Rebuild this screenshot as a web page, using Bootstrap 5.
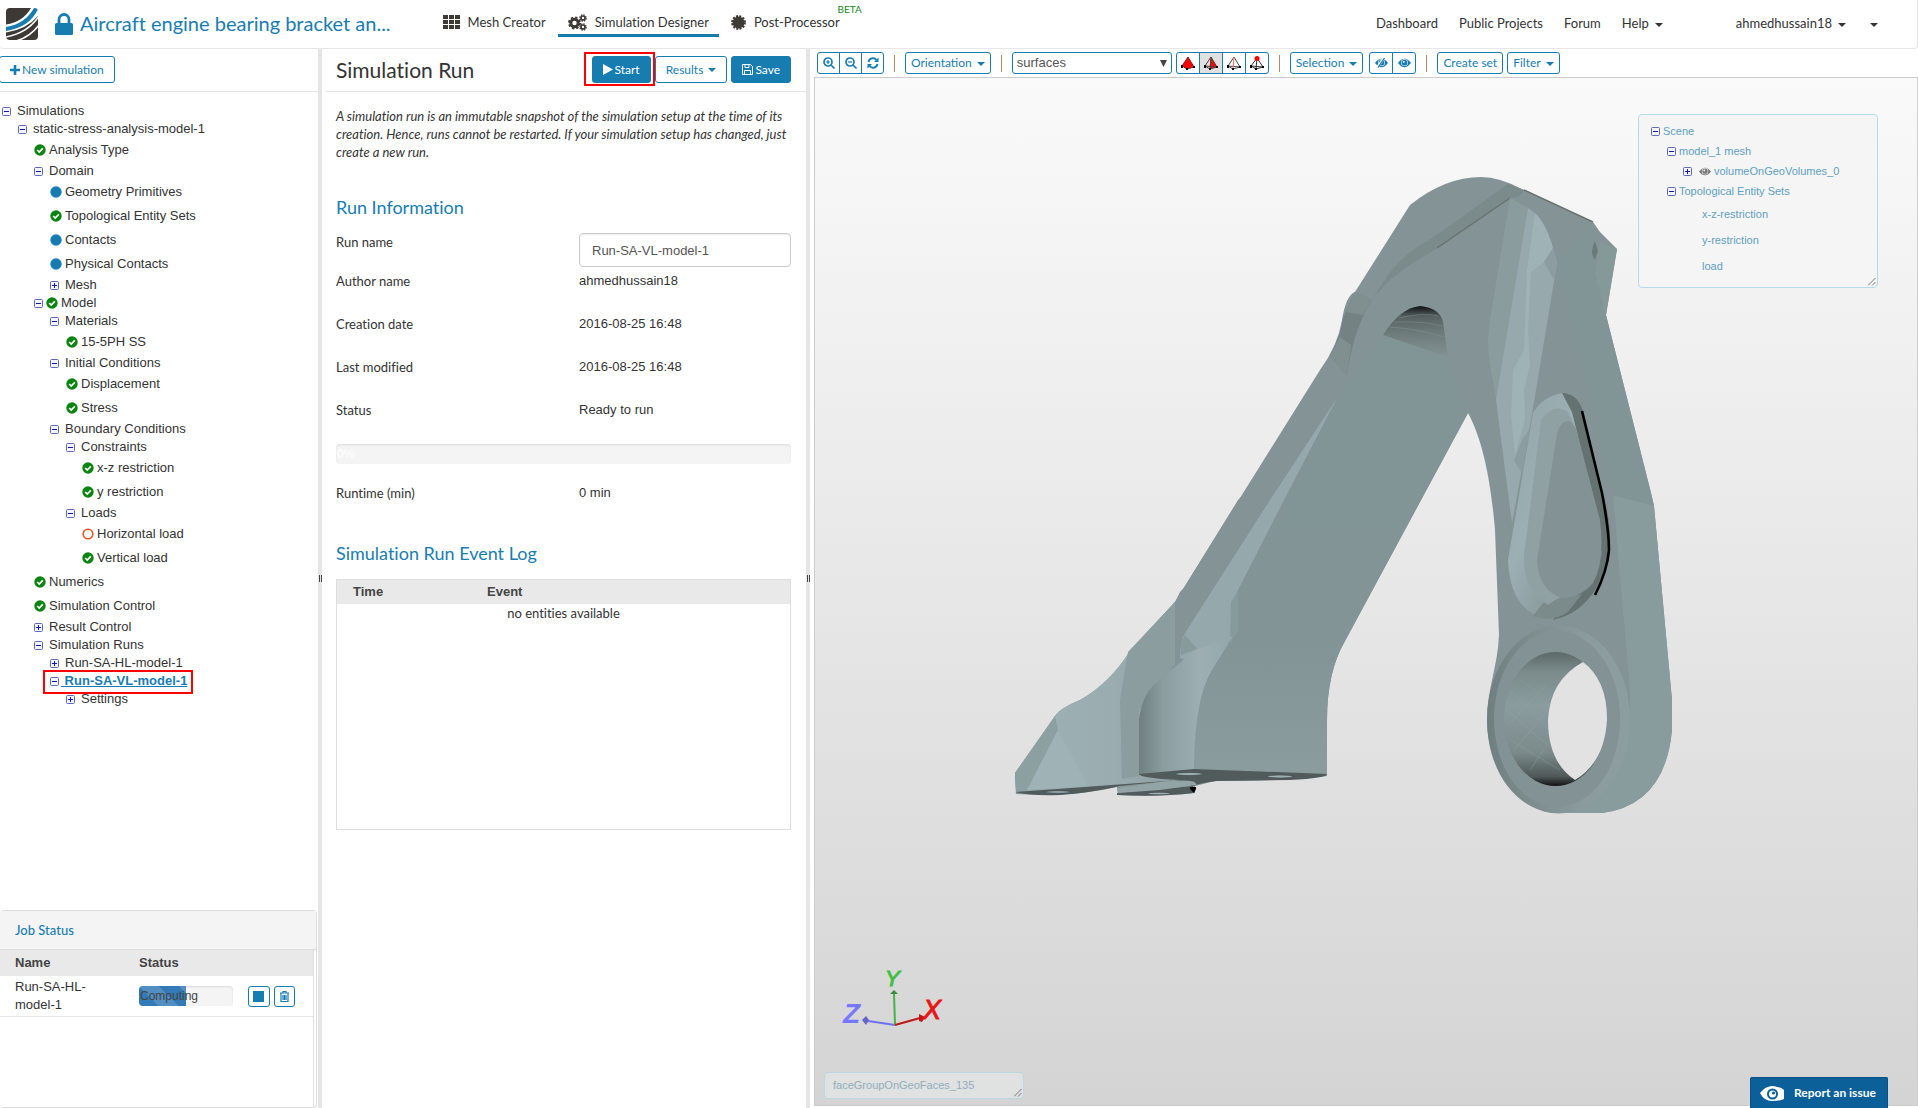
<!DOCTYPE html>
<html lang="en">
<head>
<meta charset="utf-8">
<meta name="viewport" content="width=device-width, initial-scale=1">
<title>Simulation Designer</title>
<link href="https://cdn.jsdelivr.net/npm/bootstrap@5.3.0/dist/css/bootstrap.min.css" rel="stylesheet">
<style>
:root{--brand:#177db0;--ink:#333;--bar:#e5e5e5}
body{font-family:Lato,"Liberation Sans",sans-serif;font-size:13px;line-height:18px;color:var(--ink);height:100vh;overflow:hidden;background:#fff;font-variant-ligatures:none}
a{color:inherit;text-decoration:none}
svg{display:block;flex:none}
.topbar{height:49px;border-bottom:1px solid #e7e7e7;border-right:1px solid #e7e7e7;border-radius:0 0 4px 4px;padding-left:6px}
.proj-title{font-size:20px;line-height:26px;color:var(--brand);margin:-2px 0 0 6px}
.tabs-main{margin-left:42px;gap:2px}
.tab-item{height:37px;padding:10px 10px 0;border-bottom:3px solid transparent;position:relative}
.tab-item.current{border-color:var(--brand)}
.beta{position:absolute;right:-12px;top:3px;font-size:10px;line-height:12px;color:#128a1a}
.caret:after{content:"";display:inline-block;border:4px solid transparent;border-top-color:currentColor;border-bottom:0;vertical-align:middle;margin-left:6px}
.tbtn .caret:after{margin-left:5px}
.top-links{gap:21px;padding-right:39px;margin-top:-2px}
.user-link{margin-left:52px}
.more-link{margin-left:-3px}
.arial{font-family:"Liberation Sans",Arial,sans-serif;font-size:13px}
.side{width:318px}
.mid{width:484px}
.splitter{width:4px;background:var(--bar)}
.grip{width:3px;height:7px;border:solid #444;border-width:0 1px}
.tbtn{font-family:inherit;font-size:12px;border:1px solid var(--brand);border-radius:3px;color:var(--brand);background:#fff;display:inline-flex;align-items:center;justify-content:center;white-space:nowrap}
.tbtn.md{height:27px;padding:0 10px;gap:2px}
.tbtn.sm{height:22px;padding:0 5px}
.tbtn.fillb{background:var(--brand);color:#fff}
.tbtn.new-sim{margin:7px 0 8px -1px}
.strip{height:43px;border-bottom:1px solid #e5e5e5}
.mid .strip{padding:0 15px 1px 10px}
.tree,.tree ul{list-style:none;margin:0;padding:0}
.tree ul{padding-left:16px}
.tree{padding:10px 0 0 2px}
.node{display:flex;align-items:center;height:18px;position:relative}
.node.leaf{height:24px}
.tog{border:0;background:none;padding:0;width:11px;margin-right:4px;flex:none}
.tog.tight{width:9px;margin-right:3px}
.st{margin-right:3px}
.picked{color:var(--brand);font-weight:700;text-decoration:underline;white-space:pre;margin-left:-4px}
.mark-red{position:absolute;border:2px solid #f00;pointer-events:none}
.jobs{border:1px solid #ddd;border-left:0;border-radius:4px;margin-right:1px;height:198px}
.jobs h2{font-size:13px;line-height:38px;color:var(--brand);background:#f4f4f4;margin:0;padding-left:15px;border-bottom:1px solid #ddd}
.jobs-body{border-right:1px solid #ddd;margin-right:2px}
.grid-t{width:100%;border-collapse:collapse}
.grid-t th{background:#e9e9e9;color:#444}
.jobs .grid-t th{height:26px;padding:0 0 0 15px}
.jobs .grid-t td{padding:2px 0 2px 15px;border-bottom:1px solid #e5e5e5}
.jobs .grid-t th+th,.jobs .grid-t td+td{padding-left:0}
.meter{background:#f4f4f4;border-radius:4px;height:20px;box-shadow:inset 0 1px 2px rgba(0,0,0,.1);overflow:hidden;display:flex;align-items:center;position:relative}
.meter-fill{height:20px;background-color:#337ab7;background-image:linear-gradient(45deg,rgba(255,255,255,.15) 25%,transparent 25%,transparent 50%,rgba(255,255,255,.15) 50%,rgba(255,255,255,.15) 75%,transparent 75%);background-size:40px 40px}
.meter-label{position:absolute;left:1px;font-size:12px;color:#444}
.mid h1{font-size:21px;line-height:26px;margin:0;font-weight:400}
.mid h2{font-size:18px;line-height:24px;margin:0;font-weight:400;color:var(--brand)}
.mid-body{padding:15px 15px 0 14px}
.mid .info-head{margin-top:34px}
.name-row{margin-top:14px;margin-bottom:5px}
.pairs{display:grid;grid-template-columns:243px 1fr;margin:0}
.pairs dt{font-weight:400}
.pairs dt,.pairs dd{margin:0;height:43px}
.name-row label{width:243px}
.name-in{height:34px;border:1px solid #ccc;border-radius:4px;padding:0 12px;color:#555;box-shadow:inset 0 1px 1px rgba(0,0,0,.075);min-width:0}
.runtime{padding-top:20px}
.mid .log-head{margin-top:14px}
.log-box{border:1px solid #ddd;height:251px;margin-top:14px}
.log-box th{height:24px}
.log-box td{font-family:Lato,sans-serif;font-size:13px;padding:0;text-align:center}
.tools{height:28px;padding:3px 0 0 7px}
.tools .sep{width:1px;height:17px;background:#b08a60;margin:3px 10px 0}
.surf{width:160px;height:22px;border:1px solid var(--brand);border-radius:3px;padding:0 4px;color:#555;background:#fff;appearance:none;font-size:13px}
.surf-wrap{position:relative}
.surf-wrap svg{position:absolute;right:5px;top:8px}
.joined .tbtn{border-radius:0;margin-left:-1px;width:24px;padding:0}
.joined.slim .tbtn{width:23px}
.joined .tbtn:first-child{border-radius:3px 0 0 3px;margin-left:0}
.joined .tbtn:last-child{border-radius:0 3px 3px 0}
.joined .on{background:#e0e0e0}
.eyes{margin-left:6px}
.view{position:relative;border:1px solid #ccc;margin:0 0 2px 4px;background:linear-gradient(#fafafa,#d4d4d4);overflow:hidden}
.view>.model{position:absolute;inset:0;width:100%;height:100%}
.scene{position:absolute;right:39px;top:36px;width:240px;height:174px;border:1px solid #b5dbe8;border-radius:4px;background:#f5f5f5;color:#5fa0c0;font-size:11px;padding:6px 0 0 12px}
.scene .node{height:20px}
.scene .node.leaf{height:26px;padding-left:51px}
.scene .tog{width:9px;margin-right:3px}
.corner{position:absolute;right:1px;bottom:1px}
.facebox{position:absolute;left:9px;bottom:6px;width:200px;height:27px;border:1px solid #bcd7e0;border-radius:4px;background:#e0e1e1;color:#92adbb;font-size:11px;line-height:25px;padding-left:8px}
.report{position:absolute;right:30px;bottom:0;height:31px;width:138px;border:1px solid #0a4f86;border-bottom:0;border-radius:2px 2px 0 0;background:#0b6099;color:#fff;font-size:12px;font-weight:700;padding:0 9px;display:flex;align-items:center;gap:9px;font-family:inherit;white-space:nowrap}
</style>
<script src="https://cdn.jsdelivr.net/npm/bootstrap@5.3.0/dist/js/bootstrap.bundle.min.js"></script>
</head>
<body class="d-flex flex-column">
<svg width="0" height="0" class="position-absolute">
<defs>
<symbol id="minus" viewBox="0 0 9 9"><rect x=".5" y=".5" width="8" height="8" rx="1" fill="#f3f3f8" stroke="#5b6cb4"/><path d="M2 4.500h5" stroke="#1414b8"/></symbol>
<symbol id="plus" viewBox="0 0 9 9"><rect x=".5" y=".5" width="8" height="8" rx="1" fill="#f3f3f8" stroke="#5b6cb4"/><path d="M2 4.500h5M4.500 2v5" stroke="#1414b8"/></symbol>
<symbol id="ok" viewBox="0 0 12 12"><circle cx="6" cy="6" r="5.700" fill="#0a8410"/><path d="M3.200 6l2 2 3.600-3.700" fill="none" stroke="#fff" stroke-width="1.700"/></symbol>
<symbol id="dot" viewBox="0 0 12 12"><circle cx="6" cy="6" r="5.700" fill="#177db0"/></symbol>
<symbol id="ring" viewBox="0 0 12 12"><circle cx="6" cy="6" r="4.800" fill="none" stroke="#e8502a" stroke-width="1.600"/></symbol>
<symbol id="eye" viewBox="0 0 14 10"><path d="M0 5Q7-4 14 5Q7 14 0 5z" fill="currentColor"/><circle cx="7" cy="4.600" r="3.700" fill="#fff"/><circle cx="7" cy="4.600" r="3.100" fill="currentColor"/><circle cx="6.200" cy="3.700" r="1" fill="#fff"/></symbol>
<symbol id="corner" viewBox="0 0 8 8"><path d="M0 7.500L7.500 0M4 7.500L7.500 4" stroke="#777" stroke-width="1"/></symbol>
</defs>
</svg>

<header class="topbar d-flex align-items-center flex-shrink-0">
  <a href="#" aria-label="Home"><svg width="32" height="32" viewBox="0 0 32 32"><defs><clipPath id="lg"><rect width="32" height="32" rx="4"/></clipPath></defs><g clip-path="url(#lg)"><rect width="32" height="32" fill="#3d3935"/><path d="M0 16.500Q17 14 25 0H36V2Q25 21 0 24.500z" fill="#fff"/><path d="M0 19Q19 16 28 0H32V1Q24 19 0 23z" fill="#177db0"/><path d="M0 29Q22 25 33 8M10 33Q24 29 33 17" fill="none" stroke="#fff" stroke-width="1.600"/></g></svg></a>
  <svg class="ms-3" width="20" height="22" viewBox="0 0 20 22"><path d="M5 11V6.500a5 5 0 0 1 10 0V11" fill="none" stroke="#177db0" stroke-width="2.800"/><rect x="1" y="10" width="18" height="12" rx="1.500" fill="#177db0"/></svg>
  <a href="#" class="proj-title">Aircraft engine bearing bracket an...</a>
  <nav class="tabs-main d-flex align-self-start">
    <a href="#" class="tab-item d-flex align-items-center gap-2"><svg width="17" height="14" viewBox="0 0 17 14" fill="#3d3935"><path d="M0 0h5v4H0zM6 0h5v4H6zM12 0h5v4h-5zM0 5h5v4H0zM6 5h5v4H6zM12 5h5v4h-5zM0 10h5v4H0zM6 10h5v4H6zM12 10h5v4h-5z"/></svg>Mesh Creator</a>
    <a href="#" class="tab-item current d-flex align-items-center gap-2"><svg width="19" height="17" viewBox="0 0 19 17" fill="none" stroke="#3d3935"><circle cx="6.500" cy="9" r="3.700" stroke-width="3"/><circle cx="6.500" cy="9" r="5.600" stroke-width="1.800" stroke-dasharray="2.400 2"/><circle cx="15" cy="4" r="2" stroke-width="1.700"/><circle cx="15" cy="4" r="3.200" stroke-width="1.200" stroke-dasharray="1.500 1"/><circle cx="15" cy="13" r="2" stroke-width="1.700"/><circle cx="15" cy="13" r="3.200" stroke-width="1.200" stroke-dasharray="1.500 1"/></svg>Simulation Designer</a>
    <a href="#" class="tab-item d-flex align-items-center gap-2"><svg width="15" height="15" viewBox="0 0 15 15"><circle cx="7.500" cy="7.500" r="5.900" fill="#3d3935"/><circle cx="7.500" cy="7.500" r="6.300" fill="none" stroke="#3d3935" stroke-width="2.200" stroke-dasharray="2 1.300"/></svg>Post-Processor<span class="beta">BETA</span></a>
  </nav>
  <nav class="top-links d-flex ms-auto">
    <a href="#">Dashboard</a><a href="#">Public Projects</a><a href="#">Forum</a><a href="#" class="caret">Help</a>
    <a href="#" class="caret user-link">ahmedhussain18</a><a href="#" class="caret more-link" aria-label="More"></a>
  </nav>
</header>

<main class="d-flex flex-grow-1 overflow-hidden">
  <aside class="side d-flex flex-column flex-shrink-0">
    <div class="strip"><button class="tbtn md new-sim"><svg width="10" height="10" viewBox="0 0 10 10"><path d="M5 0v10M0 5h10" stroke="#177db0" stroke-width="2.600"/></svg>New simulation</button></div>
    <ul class="tree arial flex-grow-1">
      <li><div class="node"><button class="tog" aria-label="Collapse"><svg width="9" height="9"><use href="#minus"/></svg></button><a href="#">Simulations</a></div>
      <ul><li><div class="node"><button class="tog" aria-label="Collapse"><svg width="9" height="9"><use href="#minus"/></svg></button><a href="#">static-stress-analysis-model-1</a></div>
        <ul>
        <li class="node leaf"><svg class="st" width="12" height="12"><use href="#ok"/></svg><a href="#">Analysis Type</a></li>
        <li><div class="node"><button class="tog" aria-label="Collapse"><svg width="9" height="9"><use href="#minus"/></svg></button><a href="#">Domain</a></div>
          <ul>
          <li class="node leaf"><svg class="st" width="12" height="12"><use href="#dot"/></svg><a href="#">Geometry Primitives</a></li>
          <li class="node leaf"><svg class="st" width="12" height="12"><use href="#ok"/></svg><a href="#">Topological Entity Sets</a></li>
          <li class="node leaf"><svg class="st" width="12" height="12"><use href="#dot"/></svg><a href="#">Contacts</a></li>
          <li class="node leaf"><svg class="st" width="12" height="12"><use href="#dot"/></svg><a href="#">Physical Contacts</a></li>
          <li class="node"><button class="tog" aria-label="Expand"><svg width="9" height="9"><use href="#plus"/></svg></button><a href="#">Mesh</a></li>
          </ul></li>
        <li><div class="node"><button class="tog tight" aria-label="Collapse"><svg width="9" height="9"><use href="#minus"/></svg></button><svg class="st" width="12" height="12"><use href="#ok"/></svg><a href="#">Model</a></div>
          <ul>
          <li><div class="node"><button class="tog" aria-label="Collapse"><svg width="9" height="9"><use href="#minus"/></svg></button><a href="#">Materials</a></div>
            <ul><li class="node leaf"><svg class="st" width="12" height="12"><use href="#ok"/></svg><a href="#">15-5PH SS</a></li></ul></li>
          <li><div class="node"><button class="tog" aria-label="Collapse"><svg width="9" height="9"><use href="#minus"/></svg></button><a href="#">Initial Conditions</a></div>
            <ul><li class="node leaf"><svg class="st" width="12" height="12"><use href="#ok"/></svg><a href="#">Displacement</a></li>
            <li class="node leaf"><svg class="st" width="12" height="12"><use href="#ok"/></svg><a href="#">Stress</a></li></ul></li>
          <li><div class="node"><button class="tog" aria-label="Collapse"><svg width="9" height="9"><use href="#minus"/></svg></button><a href="#">Boundary Conditions</a></div>
            <ul>
            <li><div class="node"><button class="tog" aria-label="Collapse"><svg width="9" height="9"><use href="#minus"/></svg></button><a href="#">Constraints</a></div>
              <ul><li class="node leaf"><svg class="st" width="12" height="12"><use href="#ok"/></svg><a href="#">x-z restriction</a></li>
              <li class="node leaf"><svg class="st" width="12" height="12"><use href="#ok"/></svg><a href="#">y restriction</a></li></ul></li>
            <li><div class="node"><button class="tog" aria-label="Collapse"><svg width="9" height="9"><use href="#minus"/></svg></button><a href="#">Loads</a></div>
              <ul><li class="node leaf"><svg class="st" width="12" height="12"><use href="#ring"/></svg><a href="#">Horizontal load</a></li>
              <li class="node leaf"><svg class="st" width="12" height="12"><use href="#ok"/></svg><a href="#">Vertical load</a></li></ul></li>
            </ul></li>
          </ul></li>
        <li class="node leaf"><svg class="st" width="12" height="12"><use href="#ok"/></svg><a href="#">Numerics</a></li>
        <li class="node leaf"><svg class="st" width="12" height="12"><use href="#ok"/></svg><a href="#">Simulation Control</a></li>
        <li class="node"><button class="tog" aria-label="Expand"><svg width="9" height="9"><use href="#plus"/></svg></button><a href="#">Result Control</a></li>
        <li><div class="node"><button class="tog" aria-label="Collapse"><svg width="9" height="9"><use href="#minus"/></svg></button><a href="#">Simulation Runs</a></div>
          <ul>
          <li class="node"><button class="tog" aria-label="Expand"><svg width="9" height="9"><use href="#plus"/></svg></button><a href="#">Run-SA-HL-model-1</a></li>
          <li><div class="node"><button class="tog" aria-label="Collapse"><svg width="9" height="9"><use href="#minus"/></svg></button><a href="#" class="picked"> Run-SA-VL-model-1</a><span class="mark-red" style="left:-7px;top:-2px;width:150px;height:24px"></span></div>
            <ul><li class="node"><button class="tog" aria-label="Expand"><svg width="9" height="9"><use href="#plus"/></svg></button><a href="#">Settings</a></li></ul></li>
          </ul></li>
        </ul></li></ul></li>
    </ul>
    <section class="jobs flex-shrink-0">
      <h2>Job Status</h2>
      <div class="jobs-body h-100">
        <table class="grid-t arial">
          <colgroup><col style="width:139px"><col style="width:109px"><col></colgroup>
          <thead><tr><th>Name</th><th colspan="2">Status</th></tr></thead>
          <tbody><tr><td>Run-SA-HL-<br>model-1</td>
          <td><div class="meter" style="width:94px"><div class="meter-fill" style="width:50%"></div><span class="meter-label">Computing</span></div></td>
          <td><div class="d-flex gap-1"><button class="tbtn px-1" aria-label="Stop"><svg width="12" height="17" viewBox="0 0 12 17"><path d="M0 3h11v11H0z" fill="#177db0"/></svg></button><button class="tbtn px-1" aria-label="Delete"><svg width="11" height="17" viewBox="0 0 11 17"><path d="M1 5h9M4 5V3.500h3V5M2 5v8.500h7V5M4 7v5M5.500 7v5M7 7v5" fill="none" stroke="#177db0" stroke-width="1.200"/></svg></button></div></td></tr></tbody>
        </table>
      </div>
    </section>
  </aside>
  <div class="splitter d-flex align-items-center justify-content-center flex-shrink-0"><span class="grip"></span></div>

  <section class="mid flex-shrink-0">
    <div class="strip ms-1 d-flex align-items-center">
      <h1 class="me-auto">Simulation Run</h1>
      <div class="d-flex gap-1 position-relative">
        <button class="tbtn md fillb"><svg width="10" height="11" viewBox="0 0 10 11"><path d="M0 0l10 5.500L0 11z" fill="#fff"/></svg>Start</button>
        <button class="tbtn md"><span class="caret">Results</span></button>
        <button class="tbtn md fillb"><svg width="11" height="11" viewBox="0 0 11 11" fill="none" stroke="#fff"><path d="M.5.500h8l2 2v8H.500zM3 .500v3h4v-3M2.500 10.500v-4h6v4"/></svg>Save</button>
        <span class="mark-red" style="left:-8px;top:-4px;width:71px;height:34px"></span>
      </div>
    </div>
    <div class="mid-body">
      <p class="fst-italic m-0">A simulation run is an immutable snapshot of the simulation setup at the time of its creation. Hence, runs cannot be restarted. If your simulation setup has changed, just create a new run.</p>
      <h2 class="info-head">Run Information</h2>
      <div class="name-row d-flex"><label for="rn">Run name</label><input id="rn" class="name-in arial flex-grow-1" value="Run-SA-VL-model-1"></div>
      <dl class="pairs">
        <dt>Author name</dt><dd class="arial">ahmedhussain18</dd>
        <dt>Creation date</dt><dd class="arial">2016-08-25 16:48</dd>
        <dt>Last modified</dt><dd class="arial">2016-08-25 16:48</dd>
        <dt>Status</dt><dd class="arial">Ready to run</dd>
      </dl>
      <div class="meter arial"><span class="meter-label text-white">0%</span></div>
      <dl class="pairs runtime"><dt>Runtime (min)</dt><dd class="arial">0 min</dd></dl>
      <h2 class="log-head">Simulation Run Event Log</h2>
      <div class="log-box">
        <table class="grid-t arial"><colgroup><col style="width:134px"><col></colgroup>
        <thead><tr><th class="ps-3">Time</th><th class="ps-3">Event</th></tr></thead>
        <tbody><tr><td colspan="2">no entities available</td></tr></tbody></table>
      </div>
    </div>
  </section>
  <div class="splitter d-flex align-items-center justify-content-center flex-shrink-0"><span class="grip"></span></div>

  <section class="flex-grow-1 d-flex flex-column" style="min-width:0">
    <div class="tools d-flex align-items-start">
      <div class="joined slim d-flex">
        <button class="tbtn sm" aria-label="Zoom in"><svg width="12" height="12" viewBox="0 0 12 12" fill="none" stroke="#177db0" stroke-width="1.700"><circle cx="5" cy="5" r="4"/><path d="M8 8l3.500 3.500"/><path d="M3 5h4M5 3v4" stroke-width="1.200"/></svg></button>
        <button class="tbtn sm" aria-label="Zoom out"><svg width="12" height="12" viewBox="0 0 12 12" fill="none" stroke="#177db0" stroke-width="1.700"><circle cx="5" cy="5" r="4"/><path d="M8 8l3.500 3.500"/><path d="M3 5h4" stroke-width="1.200"/></svg></button>
        <button class="tbtn sm" aria-label="Refresh"><svg width="12" height="12" viewBox="0 0 12 12" fill="none" stroke="#177db0" stroke-width="1.900"><path d="M1.500 5A4.500 4.500 0 0 1 9.500 3M10.500 7A4.500 4.500 0 0 1 2.500 9"/><path d="M11.500.500v4.500H7zM.500 11.500V7H5z" fill="#177db0" stroke="none"/></svg></button>
      </div>
      <span class="sep"></span>
      <button class="tbtn sm"><span class="caret">Orientation</span></button>
      <span class="sep"></span>
      <div class="surf-wrap"><select class="surf arial d-block" aria-label="Entity type"><option>surfaces</option></select><svg width="7" height="7" viewBox="0 0 7 7"><path d="M0 0h7L3.500 7z" fill="#444"/></svg></div>
      <div class="joined d-flex ms-1">
        <button class="tbtn sm" aria-label="Volumes"><svg width="14" height="14" viewBox="0 0 14 14"><path d="M7 1L1 10l5 3 7-2z" fill="#f00"/><path d="M7 1L1 10M7 1l6 10-7 2-5-3" fill="none" stroke="#722"/><path d="M0 9h2v3H0zM5 12h2v2H5zM12 10h2v2h-2z"/></svg></button>
        <button class="tbtn sm on" aria-label="Faces"><svg width="14" height="14" viewBox="0 0 14 14"><path d="M7 1L5.500 13 13 11z" fill="#f00"/><path d="M7 1L1 10l5 3 7-2zM7 1L6 13M1 10l12 1" fill="none" stroke="#444"/><path d="M0 9h2v3H0zM5 12h2v2H5zM12 10h2v2h-2z"/></svg></button>
        <button class="tbtn sm" aria-label="Edges"><svg width="14" height="14" viewBox="0 0 14 14"><path d="M7 1L1 10l5 3 7-2zM1 10l12 1" fill="none" stroke="#444"/><path d="M7 1L6 13" stroke="#f66"/><path d="M0 9h2v3H0zM5 12h2v2H5zM12 10h2v2h-2z"/></svg></button>
        <button class="tbtn sm" aria-label="Vertices"><svg width="14" height="14" viewBox="0 0 14 14"><path d="M7 2L1 10l5 3 7-2zM7 2L6 13M1 10l12 1" fill="none" stroke="#333"/><path d="M0 9h2v3H0zM5 12h2v2H5zM12 10h2v2h-2z"/><circle cx="7" cy="2.500" r="2.500" fill="#f00"/></svg></button>
      </div>
      <span class="sep"></span>
      <button class="tbtn sm"><span class="caret">Selection</span></button>
      <div class="joined eyes d-flex">
        <button class="tbtn sm" aria-label="Hide"><svg width="13" height="10"><use href="#eye"/><path d="M2.500 9L9 0" stroke="#fff" stroke-width="2.500"/><path d="M3 9.500L9.500 0" stroke="#177db0" stroke-width="1.300"/></svg></button>
        <button class="tbtn sm" aria-label="Show"><svg width="13" height="10"><use href="#eye"/></svg></button>
      </div>
      <span class="sep"></span>
      <button class="tbtn sm">Create set</button>
      <button class="tbtn sm ms-1"><span class="caret">Filter</span></button>
    </div>
    <div class="view flex-grow-1">
      <svg class="model" viewBox="815 78 1102 1027" preserveAspectRatio="xMidYMid meet">
        <defs>
          <linearGradient id="foot" x1="0" x2="1"><stop offset="0" stop-color="#6f7f80"/><stop offset=".25" stop-color="#8a9c9e"/><stop offset=".65" stop-color="#9dafb3"/><stop offset="1" stop-color="#93a6a9"/></linearGradient>
          <linearGradient id="plate" x1="0" x2="1"><stop offset="0" stop-color="#8a9d9f"/><stop offset=".25" stop-color="#9cafb2"/><stop offset=".6" stop-color="#9aacaf"/><stop offset="1" stop-color="#8c9ea0"/></linearGradient>
          <linearGradient id="bore" x1="0" y1="0" x2="0" y2="1"><stop offset="0" stop-color="#5d6968"/><stop offset=".15" stop-color="#7b8b8c"/><stop offset=".4" stop-color="#8b9c9e"/><stop offset=".75" stop-color="#7b8b8c"/><stop offset=".93" stop-color="#4e5857"/><stop offset="1" stop-color="#111"/></linearGradient>
          <linearGradient id="arch" x1="0" y1="0" x2="0" y2="1"><stop offset="0" stop-color="#0c0f0f"/><stop offset=".2" stop-color="#566060"/><stop offset=".5" stop-color="#6c7979"/><stop offset="1" stop-color="#829294"/></linearGradient>
          <linearGradient id="leg" x1="0" y1="0" x2="0" y2="1"><stop offset="0" stop-color="#829596"/><stop offset=".7" stop-color="#829495"/><stop offset="1" stop-color="#8a9c9e"/></linearGradient>
          <linearGradient id="pock" x1="0" y1="0" x2="1" y2="1"><stop offset="0" stop-color="#93a5a8"/><stop offset=".4" stop-color="#9cafb2"/><stop offset=".65" stop-color="#8b9c9e"/><stop offset="1" stop-color="#5f6b6a"/></linearGradient>
          <linearGradient id="rim" x1="0" x2="1"><stop offset="0" stop-color="#6f7f80"/><stop offset=".3" stop-color="#7d8d8e"/><stop offset=".7" stop-color="#8b9c9e"/><stop offset="1" stop-color="#8c9ea0"/></linearGradient>
        </defs>
        <path fill="#849496" d="M1410 205Q1445 177 1481 177Q1500 177 1524 190L1593 222L1600 232L1617 249L1606 315L1651 493L1654 506L1672 700L1672 730Q1665 805 1602 813H1555C1510 808 1487 765 1487 719C1487 690 1498 665 1499 635L1495 530C1490 470 1480 435 1468 413L1345 641Q1327 672 1327 720V776Q1290 781 1215 781L1195 786V793Q1160 797 1118 795L1117 787Q1075 797 1016 794L1015 773L1027 758L1055 716Q1060 708 1080 700Q1110 683 1130 651L1175 602L1320 370Q1338 345 1342 320T1355 292z"/>
        <path fill="url(#leg)" d="M1383 335L1448 357L1468 413L1345 641Q1327 672 1327 720V775L1194 770Q1193 700 1212 670L1238 600L1337 398z"/>
        <path fill="url(#plate)" d="M1175 602V664L1150 695L1139 775L1180 780L1070 791H1016L1015 773L1055 716Q1060 708 1080 700Q1110 683 1130 651z"/>
        <path fill="#8b9d9f" d="M1175 602V664L1139 710V776L1122 779L1120 700L1128 652z"/>
        <path fill="#8c9fa1" d="M1015 773L1055 716L1058 730L1027 790L1016 792z"/><path fill="#9fb2b5" d="M1058 730L1088 786L1027 790z"/>
        <path fill="#849395" d="M1175 664V602L1180 592L1270 500L1183 635L1180 660z"/>
        <path fill="#849395" d="M1180 594L1238 500L1337 398L1284 480L1183 635z"/>
        <path fill="#95a8ab" d="M1337 398L1284 500L1238 590L1233 636L1190 662L1180 658Q1180 640 1185 633L1270 500z"/>
        <path fill="#879a9c" d="M1231 602L1238 590V630L1230 645zM1181 655q-2-12 4-20l12 14z"/>
        <path fill="url(#foot)" d="M1139 775V720Q1142 694 1157 682L1195 650L1233 636L1212 670Q1194 700 1194 770z"/>
        <path fill="#515b5c" d="M1139 774L1194 769L1327 774Q1327 778 1290 780L1217 781Q1200 783 1193 786Q1155 784 1180 780Q1140 778 1139 774zM1015 792L1180 780L1120 786Q1090 793 1060 795Q1030 796 1015 792zM1117 793L1193 786V793Q1160 797 1117 795z"/>
        <path fill="#92a4a6" d="M1117 788L1160 782Q1198 778 1196 785L1160 790L1118 793z"/><path fill="#000" d="M1190 787h6v2l-2 4-4-4z"/>
        <g fill="#9db2b5" stroke="#3e4748" stroke-width=".6"><ellipse cx="1189" cy="774" rx="14" ry="1.500"/><ellipse cx="1280" cy="776.500" rx="13" ry="1.500"/><ellipse cx="1058" cy="792" rx="13" ry="1.200"/><ellipse cx="1159" cy="793.500" rx="12" ry="1.200"/></g>
        <path fill="#7b8a8b" d="M1508 184L1524 190Q1522 197 1510 198L1437 248L1425 256Q1390 275 1372 300L1388 275Q1408 250 1428 241z"/>
        <path d="M1437 248L1510 198M1524 190L1593 222" stroke="#68736f" stroke-width="1.500" fill="none"/>
        <path fill="#748283" d="M1355 292L1372 300Q1353 330 1347 376L1330 356Q1341 335 1343 318z"/><path fill="#809091" d="M1330 356L1347 376L1351 345L1340 337zM1355 292L1372 300L1363 315L1346 312z"/>
        <path fill="url(#arch)" d="M1383 335Q1400 308 1420 306Q1440 308 1443 322L1448 357z"/>
        <path d="M1399 318Q1425 312 1438 316M1395 322Q1425 321 1442 326M1389 327Q1420 329 1444 337" fill="none" stroke="#8a9999" stroke-width="1" opacity=".4"/>
        <path fill="#8b9c9f" d="M1510 198L1528 208L1497 402Q1488 360 1488 340L1490 320z"/>
        <path fill="#97a9ac" d="M1528 208Q1545 218 1553 248L1557 263L1531 420L1512 523L1496 400z"/>
        <path fill="#9fb2b5" d="M1535 213Q1545 222 1553 248L1544 262L1531 272L1528 330L1530 365L1524 390L1525 420L1515 455L1511 415L1513 370L1524 350L1527 270z"/>
        <path fill="#8b9da0" d="M1553 248L1557 263L1554 280L1544 262zM1522 440l8-12-8 45-8-12z"/>
        <path fill="#829596" d="M1557 263L1593 222L1595 273L1606 315L1651 493L1654 506L1613 496z"/>
        <path fill="#869999" d="M1600 242L1617 249L1606 315L1595 273z"/><path fill="#6c7a7b" d="M1595 241l3 10-3 9q-6-8 0-19z"/>
        <path fill="#889b9d" d="M1613 495L1654 506L1672 700L1672 730Q1665 805 1602 813H1560Q1625 800 1630 719V690z"/>
        <path fill="url(#pock)" d="M1562 393Q1542 397 1533 413L1508 560Q1510 615 1553 620Q1592 612 1609 560Q1613 530 1603 493L1580 408Q1575 394 1562 393z"/>
        <path fill="#647271" d="M1562 393Q1577 393 1583 411L1603 493Q1613 530 1609 560Q1592 612 1553 620L1566 598Q1595 590 1602 553L1577 432L1572 412z"/>
        <path fill="#7b8a8b" d="M1533 616L1543 603L1562 598L1582 594L1568 612Q1552 623 1533 616z"/>
        <path fill="#8fa1a3" d="M1541 420Q1553 402 1568 412L1577 432L1557 433L1537 560L1560 597L1548 605Q1523 590 1524 556z"/>
        <path fill="#839295" d="M1557 433Q1561 421 1568 421Q1574 422 1577 432L1600 520Q1605 562 1593 583Q1580 598 1562 598Q1538 590 1537 560z"/>
        <path d="M1582 411L1602 493Q1609 530 1609 550Q1607 572 1595 595" fill="none" stroke="#000" stroke-width="2.600"/>
        <ellipse cx="1558.500" cy="719.500" rx="71.500" ry="94" fill="url(#rim)"/>
        <ellipse cx="1557" cy="719" rx="63" ry="88" fill="#839294"/>
        <ellipse cx="1555.500" cy="719" rx="51.500" ry="67" fill="url(#bore)"/>
        <path d="M1510 690l44 45M1507 710l46 40M1510 740l50 30M1520 680l30 20M1508 725l38-40M1514 750l34-40M1530 770l20-30" stroke="#98a9aa" stroke-width="1.500" opacity=".2"/>
        <path fill="#e2e2e2" d="M1583 662Q1607 680 1607 719Q1605 762 1575 780Q1548 762 1548 720Q1550 680 1583 662z"/>
        <g stroke-width="2"><path d="M895 1025L868 1021" stroke="#6f6ff5"/><path d="M895 1025L894 993" stroke="#45b345"/><path d="M895 1025L920 1018" stroke="#c01818"/></g>
        <path d="M862 1020l4-4 3 4-3 5z" fill="#6363c8"/><path d="M890 994l4-4 4 4z" fill="#3e8a3e"/><path d="M919 1014l6 3-3 5-3-1z" fill="#c01818"/>
        <g font-family="Liberation Sans" font-style="italic" font-weight="700"><text x="843" y="1023" font-size="28" fill="#7676ff">Z</text><text x="885" y="986" font-size="22" font-weight="400" stroke="#3fbf3f" fill="#3fbf3f">Y</text><text x="923" y="1019" font-size="27" font-weight="400" stroke="#e81616" fill="#e81616">X</text></g>
      </svg>
      <div class="scene arial">
        <div class="node"><button class="tog" aria-label="Collapse"><svg width="9" height="9"><use href="#minus"/></svg></button>Scene</div>
        <div class="node ms-3"><button class="tog" aria-label="Collapse"><svg width="9" height="9"><use href="#minus"/></svg></button>model_1 mesh</div>
        <div class="node ms-3 ps-3"><button class="tog" aria-label="Expand"><svg width="9" height="9"><use href="#plus"/></svg></button><svg class="st ms-1" width="12" height="9" color="#777"><use href="#eye"/></svg>volumeOnGeoVolumes_0</div>
        <div class="node ms-3"><button class="tog" aria-label="Collapse"><svg width="9" height="9"><use href="#minus"/></svg></button>Topological Entity Sets</div>
        <div class="node leaf">x-z-restriction</div>
        <div class="node leaf">y-restriction</div>
        <div class="node leaf">load</div>
        <svg class="corner" width="8" height="8"><use href="#corner"/></svg>
      </div>
      <div class="facebox arial">faceGroupOnGeoFaces_135<svg class="corner" width="8" height="8"><use href="#corner"/></svg></div>
    </div>
  </section>
</main>
<button class="report"><svg width="25" height="17" viewBox="0 0 25 17"><path d="M0 8Q5 2 8 2q4-2 9 0 4 0 7 3v9q-4 2-12 2Q4 16 0 8z" fill="#fff"/><circle cx="12.500" cy="9" r="5.500" fill="#0b6099"/><circle cx="12.500" cy="9" r="3.500" fill="#fff"/><circle cx="13.500" cy="8" r="1.600" fill="#0b6099"/></svg>Report an issue</button>
</body>
</html>
